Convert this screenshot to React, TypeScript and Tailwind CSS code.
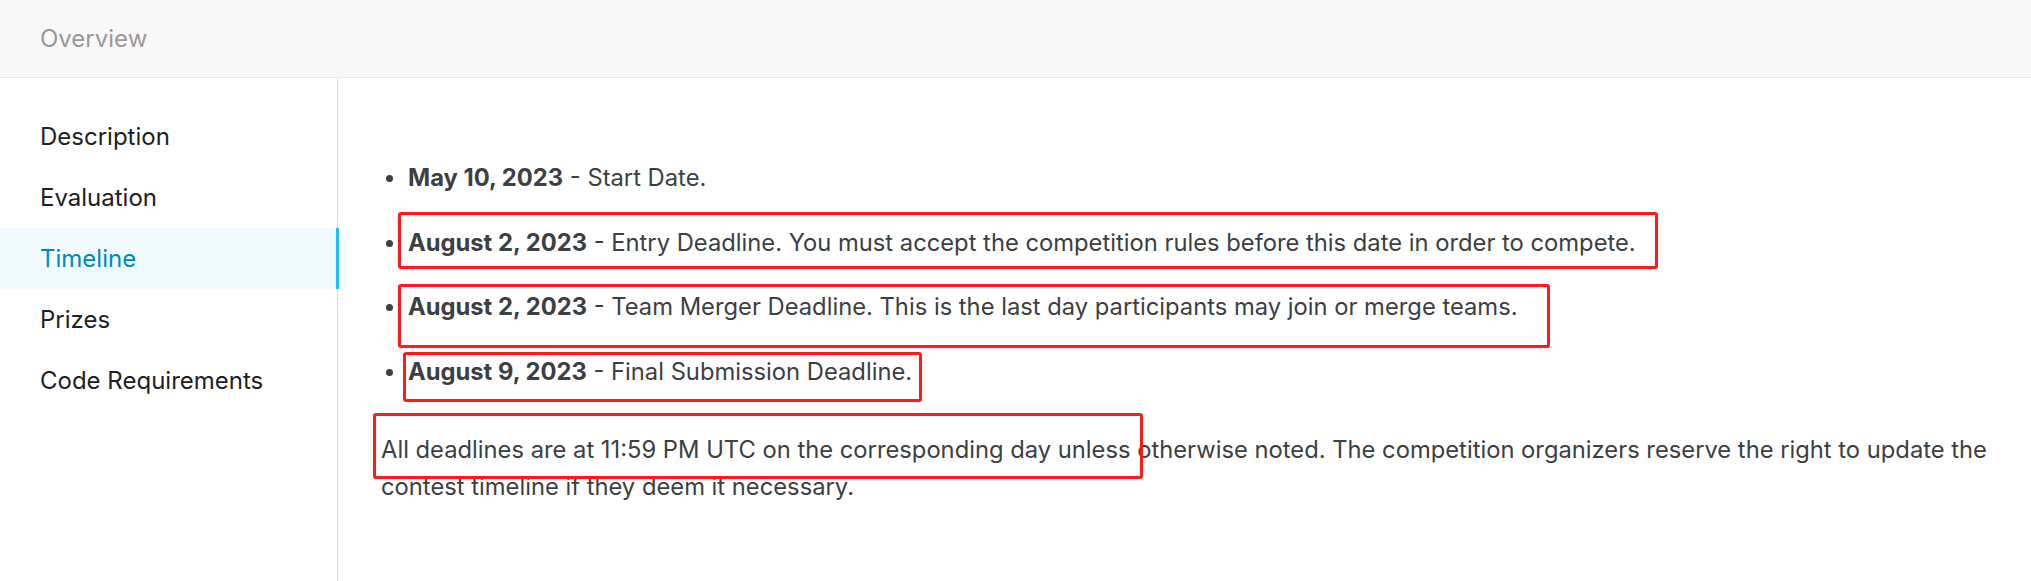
import React from "react";

const navItems = ["Description", "Evaluation", "Timeline", "Prizes", "Code Requirements"];

const timeline = [
  { date: "May 10, 2023", text: "Start Date." },
  {
    date: "August 2, 2023",
    text: "Entry Deadline. You must accept the competition rules before this date in order to compete.",
  },
  {
    date: "August 2, 2023",
    text: "Team Merger Deadline. This is the last day participants may join or merge teams.",
  },
  { date: "August 9, 2023", text: "Final Submission Deadline." },
];

// red annotation boxes drawn over the screenshot
const marks = [
  "left-[398px] top-[212px] w-[1260px] h-[57px]",
  "left-[398px] top-[284px] w-[1152px] h-[64px]",
  "left-[403px] top-[352px] w-[519px] h-[50px]",
  "left-[373px] top-[413px] w-[770px] h-[66px]",
];

function App() {
  return (
    <div className="relative w-[2031px] h-[581px] overflow-hidden bg-white font-['Inter','Noto_Sans',sans-serif]">
      {/* Barra do topo */}
      <div className="h-[78px] bg-[#f8f8f8] border-b border-[#e8e8e8] flex items-center pl-[40px]">
        <span className="text-[24px] text-[#999999]">Overview</span>
      </div>

      <div className="flex h-[503px]">
        {/* Menu lateral */}
        <aside className="w-[338px] shrink-0 border-r border-[#dcdcdc] pt-[28px]">
          {navItems.map((item) => {
            const active = item === "Timeline";
            return (
              <div
                key={item}
                className={
                  active
                    ? "h-[61px] flex items-center pl-[40px] text-[24px] text-[#008abc] bg-[#f1faff] border-r-[3px] border-[#20beff] -mr-[2px]"
                    : "h-[61px] flex items-center pl-[40px] text-[24px] text-[#202124]"
                }
              >
                {item}
              </div>
            );
          })}
        </aside>

        {/* Conteúdo */}
        <main className="flex-1 pl-[43px] pr-[30px] pt-[81px] text-[23.75px] text-[#3c4043]">
          <ul className="flex flex-col gap-[27.5px]">
            {timeline.map((t, i) => (
              <li key={i} className="flex items-center h-[37px] leading-[37px]">
                <span className="ml-[5px] mr-[15px] w-[7px] h-[7px] rounded-full bg-[#3c4043] shrink-0 relative top-[1px]" />
                <span>
                  <strong className="font-bold">{t.date}</strong> - {t.text}
                </span>
              </li>
            ))}
          </ul>
          <p className="mt-[41px] leading-[37px]">
            All deadlines are at 11:59 PM UTC on the corresponding day unless otherwise noted. The competition
            organizers reserve the right to update the contest timeline if they deem it necessary.
          </p>
        </main>
      </div>

      {marks.map((m, i) => (
        <div key={i} className={`absolute ${m} border-[3px] border-[#ff1a1a] rounded-[3px] pointer-events-none`} />
      ))}
    </div>
  );
}

export default App;
